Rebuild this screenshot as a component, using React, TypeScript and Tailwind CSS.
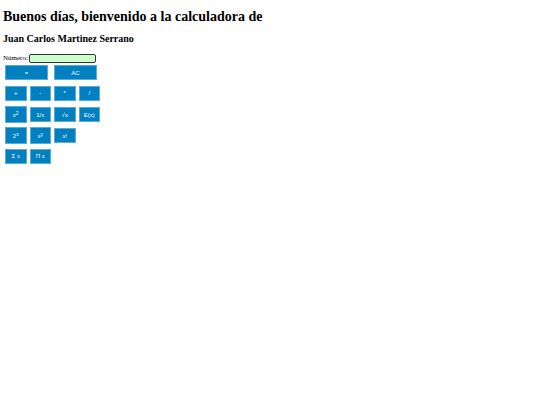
import React, { useState } from 'react';

const KEY = 'flex items-center justify-center bg-[#0080c0] border border-[#58aed8] text-white text-[6px] leading-[8px] hover:bg-[#006ba1]';

const SUP = 'text-[5px] leading-none -top-[2px]';

type Key = { id: string; label: React.ReactNode; tall?: boolean };

const rows: Key[][] = [
  [
    { id: '+', label: '+' },
    { id: '-', label: '-' },
    { id: '*', label: '*' },
    { id: '/', label: '/' },
  ],
  [
    { id: 'sq', label: <span>x<sup className={SUP}>2</sup></span>, tall: true },
    { id: 'inv', label: '1/x' },
    { id: 'sqrt', label: '√x' },
    { id: 'int', label: 'E(x)' },
  ],
  [
    { id: 'pow2', label: <span>2<sup className={SUP}>x</sup></span>, tall: true },
    { id: 'pow', label: <span>x<sup className={SUP}>y</sup></span>, tall: true },
    { id: 'fact', label: 'x!' },
  ],
  [
    { id: 'sum', label: 'Σ x' },
    { id: 'prod', label: 'Π x' },
  ],
];

function factorial(n: number): number {
  return n <= 1 ? 1 : n * factorial(n - 1);
}

export default function App() {
  const [value, setValue] = useState('');
  const [stored, setStored] = useState<{ n: number; op: string } | null>(null);

  const press = (id: string) => {
    const n = Number(value);
    const list = value.split(',').map(Number);
    switch (id) {
      case 'sq': return setValue(String(n * n));
      case 'inv': return setValue(String(1 / n));
      case 'sqrt': return setValue(String(Math.sqrt(n)));
      case 'int': return setValue(String(Math.trunc(n)));
      case 'pow2': return setValue(String(2 ** n));
      case 'fact': return setValue(String(factorial(Math.min(n, 170))));
      case 'sum': return setValue(String(list.reduce((a, b) => a + b, 0)));
      case 'prod': return setValue(String(list.reduce((a, b) => a * b, 1)));
      default:
        setStored({ n, op: id });
        setValue('');
    }
  };

  const equals = () => {
    if (!stored) return;
    const a = stored.n;
    const b = Number(value);
    const result =
      stored.op === '+' ? a + b :
      stored.op === '-' ? a - b :
      stored.op === '*' ? a * b :
      stored.op === '/' ? a / b : a ** b;
    setValue(String(result));
    setStored(null);
  };

  const clear = () => {
    setValue('');
    setStored(null);
  };

  return (
    <main className="min-h-screen bg-white px-[3px] pt-[9px] text-black font-['Liberation_Serif',serif]">
      <h1 className="text-[14px] leading-[16px] font-bold">Buenos días, bienvenido a la calculadora de</h1>
      <h2 className="mt-2 text-[10px] leading-[12px] font-bold">Juan Carlos Martinez Serrano</h2>

      <div className="mt-2 flex items-center gap-px">
        <label htmlFor="numero" className="text-[7px] leading-[10px]">Número:</label>
        <input
          id="numero"
          type="text"
          value={value}
          onChange={e => setValue(e.target.value)}
          className="w-[67px] h-[9px] px-[2px] text-[6px] bg-[#ccffcc] border border-[#333] rounded-[2px] outline-none font-['Liberation_Sans',sans-serif]"
        />
      </div>

      <div className="mt-[2px] ml-[2px] flex flex-col gap-[5px] font-['Liberation_Sans',sans-serif]">
        <div className="flex gap-[6px]">
          <button onClick={equals} className={`${KEY} w-[43px] h-[15px]`}>=</button>
          <button onClick={clear} className={`${KEY} w-[43px] h-[15px]`}>AC</button>
        </div>
        {rows.map((row, i) => (
          <div key={i} className="grid grid-cols-4 gap-[3px] w-[95px] h-[16px] items-center">
            {row.map(key => (
              <button key={key.id} onClick={() => press(key.id)} className={`${KEY} ${key.tall ? 'h-[17px]' : 'h-[15px]'}`}>
                {key.label}
              </button>
            ))}
          </div>
        ))}
      </div>
    </main>
  );
}
